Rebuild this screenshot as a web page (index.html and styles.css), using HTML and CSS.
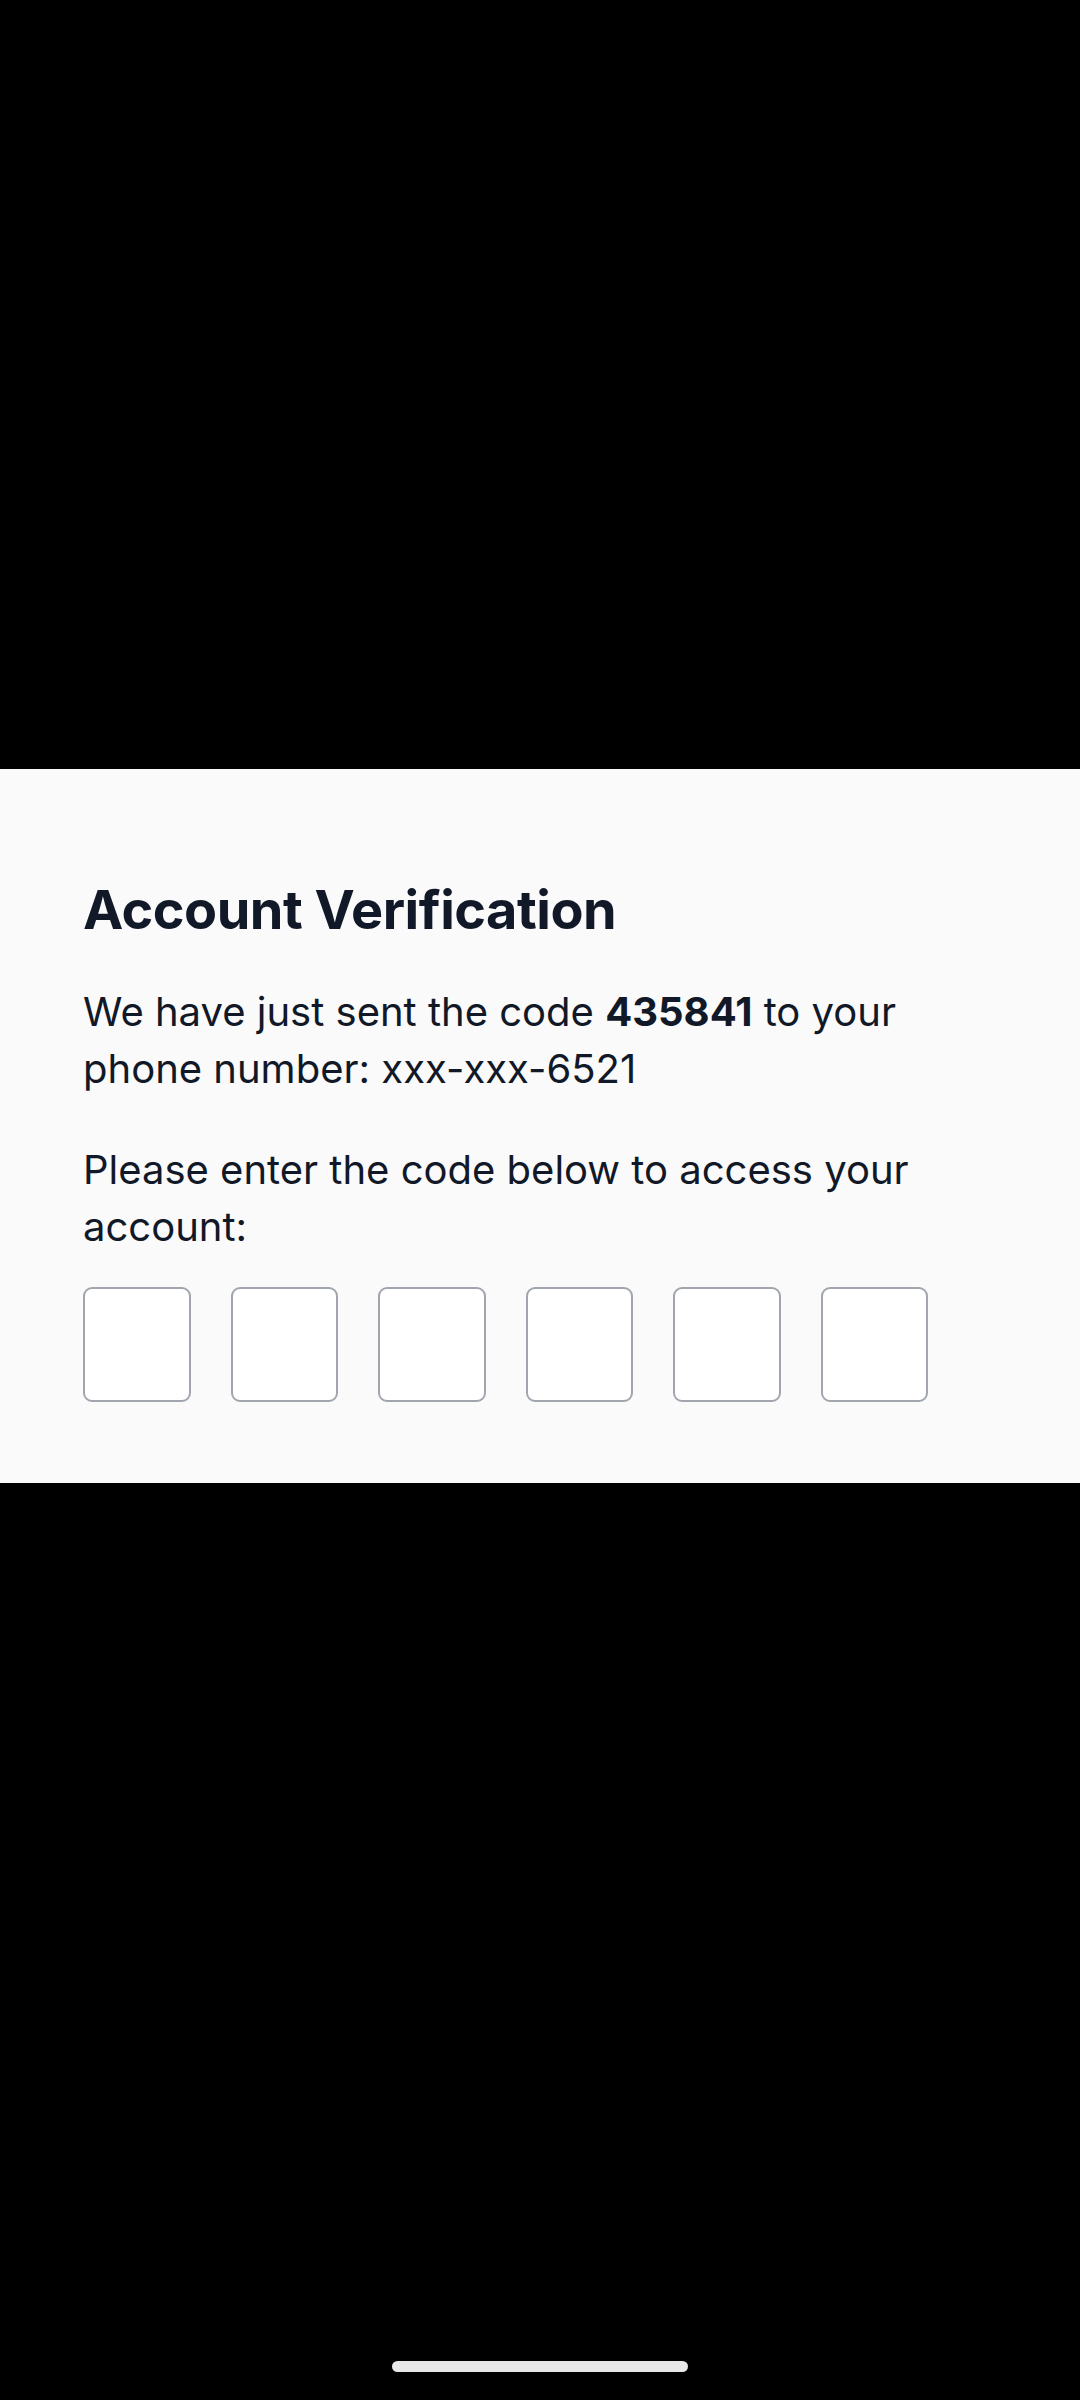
FILE: index.html
```html
<!DOCTYPE html>
<html lang="en">
<head>
	<meta charset="UTF-8">
	<title>Account Verification</title>
	<link rel="stylesheet" href="styles.css">
</head>
<body>
	<div class="screen">
		<div class="verify_card">
			<h1 class="verify_title">Account Verification</h1>
			<p class="verify_text">We have just sent the code <b>435841</b> to your phone number: xxx-xxx-6521</p>
			<p class="verify_text">Please enter the code below to access your account:</p>
			<div class="code_row">
				<input class="code_box" type="text" maxlength="1">
				<input class="code_box" type="text" maxlength="1">
				<input class="code_box" type="text" maxlength="1">
				<input class="code_box" type="text" maxlength="1">
				<input class="code_box" type="text" maxlength="1">
				<input class="code_box" type="text" maxlength="1">
			</div>
		</div>
		<div class="home_bar"></div>
	</div>
</body>
</html>
```

FILE: styles.css
```css
*{
	margin:0;
	padding:0;
	box-sizing:border-box;
}

body{
	background-color:#000;
	font-family:Inter, "Noto Sans", sans-serif;
}

.screen{
	width:1080px;
	min-height:2400px;
	display:flex;
	flex-direction:column;
}

.verify_card{
	margin-top:769px;
	background-color:#fafafa;
	padding:109px 84px 81px 83px;
	color:#111827;
}

.verify_title{
	font-size:54px;
	line-height:64px;
	font-weight:700;
	letter-spacing:-0.5px;
	margin-bottom:41px;
}

.verify_text{
	font-size:40px;
	line-height:57px;
	font-weight:400;
	margin-bottom:44px;
}

.verify_text b{
	font-weight:700;
}

.code_row{
	display:flex;
	gap:40px;
	margin-top:-12px;
}

.code_box{
	width:107.5px;
	height:115px;
	background-color:#fff;
	border:2px solid #a1a6ae;
	border-radius:9px;
	outline:none;
}

.home_bar{
	margin:auto auto 28px auto;
	width:296px;
	height:11px;
	border-radius:6px;
	background-color:#e8e8e8;
}
```
